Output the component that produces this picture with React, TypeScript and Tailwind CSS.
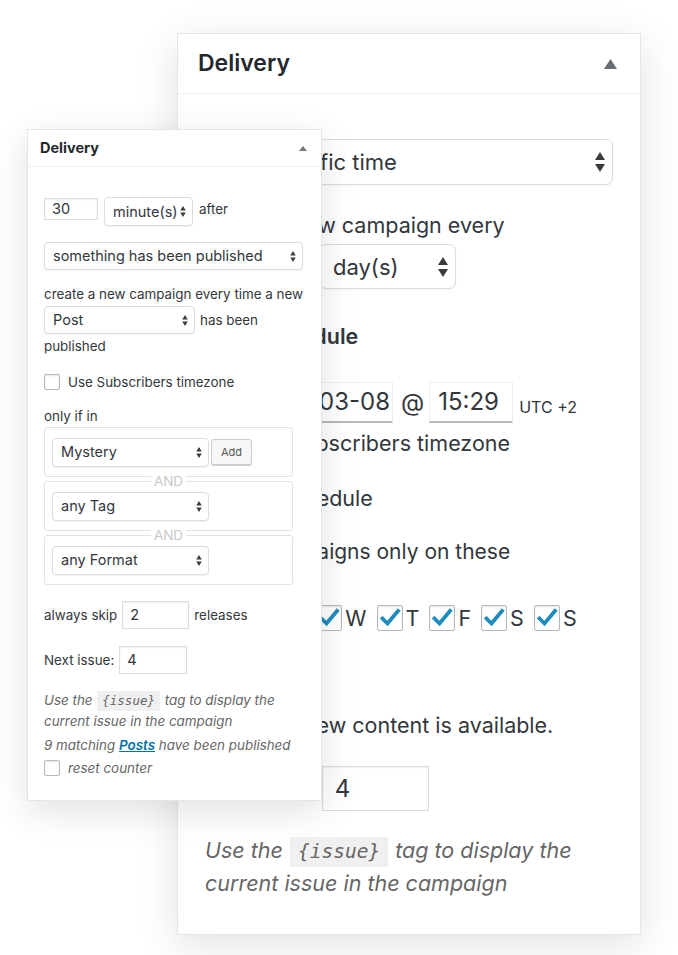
import React from "react";

function Arrows({ className }: { className?: string }) {
  return (
    <svg viewBox="0 0 10 20" className={className} fill="currentColor">
      <path d="M5 0L10 8H0Z M5 20L10 12H0Z" />
    </svg>
  );
}

function Tick({ className }: { className?: string }) {
  return (
    <svg viewBox="0 0 26 26" className={className} fill="none">
      <path d="M5.5 13.5L10.5 18.5L21 6" stroke="#1e8cbe" strokeWidth="3.8" strokeLinecap="square" />
    </svg>
  );
}

function SmallSelect({ label, className }: { label: string; className?: string }) {
  return (
    <div
      className={
        "flex items-center justify-between rounded-[4px] border border-[#dcdcdc] bg-white pl-[8px] pr-[6px] text-[14.5px] shadow-[0_1px_1px_rgba(0,0,0,0.05)] " +
        (className ?? "")
      }
    >
      <span className="whitespace-nowrap">{label}</span>
      <Arrows className="h-[11px] w-[6px] text-[#3c3c3c]" />
    </div>
  );
}

function SmallInput({ value, className }: { value: string; className?: string }) {
  return (
    <div
      className={
        "flex items-center border border-[#ddd] bg-white pl-[7px] text-[14.5px] shadow-[inset_0_1px_2px_rgba(0,0,0,0.07)] " +
        (className ?? "")
      }
    >
      {value}
    </div>
  );
}

function SmallCheckbox() {
  return (
    <span className="block h-[16px] w-[16px] shrink-0 rounded-[2px] border border-[#b4b9be] bg-white shadow-[inset_0_1px_2px_rgba(0,0,0,0.1)]" />
  );
}

function AndBox({ children, first }: { children: React.ReactNode; first?: boolean }) {
  return (
    <div
      className={
        "relative flex h-[50px] w-[249px] items-center rounded-[3px] border border-[#e2e2e2] pl-[7px] " +
        (first ? "mt-[2px]" : "mt-[4px]")
      }
    >
      {!first && (
        <span className="absolute -top-[9px] left-1/2 -translate-x-1/2 bg-white px-[3px] text-[13.5px] leading-[16px] text-[#c8c8c8]">
          AND
        </span>
      )}
      {children}
    </div>
  );
}

function SmallPanel() {
  return (
    <div className="absolute left-[27px] top-[129px] flex h-[672px] w-[295px] flex-col border border-[#e5e5e5] bg-white shadow-[0_10px_34px_rgba(0,0,0,0.12)]">
      <div className="flex h-[37px] shrink-0 items-center justify-between border-b border-[#eee] pl-[12px] pr-[14px]">
        <h2 className="text-[14.5px] font-bold text-[#23282d]">Delivery</h2>
        <svg viewBox="0 0 8 5" className="h-[5px] w-[8px] fill-[#72777c]">
          <path d="M4 0L8 5H0Z" />
        </svg>
      </div>

      <div className="flex flex-col pl-[16px] pr-[18px] pt-[30px] text-[13.4px] leading-[18px]">
        <div className="flex items-start">
          <SmallInput value="30" className="mt-[1px] h-[22px] w-[54px]" />
          <SmallSelect label="minute(s)" className="ml-[6px] h-[29px] w-[89px]" />
          <span className="ml-[6px] mt-[3px]">after</span>
        </div>

        <SmallSelect label="something has been published" className="mt-[16px] h-[28px]" />

        <p className="mt-[15px] whitespace-nowrap">create a new campaign every time a new</p>

        <div className="mt-[3px] flex items-center">
          <SmallSelect label="Post" className="h-[28px] w-[151px]" />
          <span className="ml-[5px]">has been</span>
        </div>
        <p className="mt-[3px]">published</p>

        <label className="mt-[18px] flex items-center">
          <SmallCheckbox />
          <span className="ml-[8px]">Use Subscribers timezone</span>
        </label>

        <p className="mt-[16px]">only if in</p>

        <AndBox first>
          <SmallSelect label="Mystery" className="h-[29px] w-[157px]" />
          <button className="ml-[2px] h-[26px] w-[41px] rounded-[3px] border border-[#ccc] bg-[#f7f7f7] text-[11px] text-[#555] shadow-[0_1px_0_#ccc]">
            Add
          </button>
        </AndBox>
        <AndBox>
          <SmallSelect label="any Tag" className="h-[29px] w-[157px]" />
        </AndBox>
        <AndBox>
          <SmallSelect label="any Format" className="h-[29px] w-[157px]" />
        </AndBox>

        <div className="mt-[16px] flex items-center gap-[5px]">
          <span>always skip</span>
          <SmallInput value="2" className="h-[28px] w-[67px]" />
          <span>releases</span>
        </div>

        <div className="mt-[17px] flex items-center gap-[5px]">
          <span>Next issue:</span>
          <SmallInput value="4" className="h-[28px] w-[68px]" />
        </div>

        <p className="mt-[16px] italic leading-[21px] text-[#666]">
          Use the{" "}
          <code className="mx-[1px] inline-block bg-[#f0f0f0] px-[5px] font-['DejaVu_Sans_Mono',monospace] text-[12.5px] leading-[20px]">
            {"{issue}"}
          </code>{" "}
          tag to display the current issue in the campaign
        </p>
        <p className="mt-[3px] italic leading-[21px] text-[#666]">
          9 matching{" "}
          <a className="font-semibold text-[#0073aa] underline">Posts</a> have been published
        </p>
        <label className="mt-[3px] flex items-center">
          <SmallCheckbox />
          <span className="ml-[8px] italic text-[#666]">reset counter</span>
        </label>
      </div>
    </div>
  );
}

function BigSelect({ label, className }: { label: string; className?: string }) {
  return (
    <div
      className={
        "flex items-center justify-between rounded-[7px] border border-[#dcdcdc] bg-white pr-[7px] text-[22px] shadow-[0_1px_2px_rgba(0,0,0,0.05)] " +
        (className ?? "")
      }
    >
      <span className="whitespace-nowrap">{label}</span>
      <Arrows className="h-[20px] w-[10px] text-[#3c3c3c]" />
    </div>
  );
}

function BigCheckbox({ checked }: { checked?: boolean }) {
  return (
    <span className="relative block h-[26px] w-[26px] shrink-0 rounded-[2px] border border-[#b4b9be] bg-white shadow-[inset_0_1px_2px_rgba(0,0,0,0.1)]">
      {checked && <Tick className="absolute -left-px -top-px h-[26px] w-[26px]" />}
    </span>
  );
}

function BigPanel() {
  const days = ["M", "T", "W", "T", "F", "S", "S"];
  return (
    <div className="absolute left-[177px] top-[33px] flex h-[902px] w-[464px] flex-col border border-[#e5e5e5] bg-white shadow-[0_10px_40px_rgba(0,0,0,0.12)]">
      <div className="flex h-[60px] shrink-0 items-center justify-between border-b border-[#eee] pl-[20px] pr-[23px]">
        <h2 className="text-[23px] font-semibold text-[#23282d]">Delivery</h2>
        <svg viewBox="0 0 13 10" className="h-[10px] w-[13px] fill-[#666d73]">
          <path d="M6.5 0L13 10H0Z" />
        </svg>
      </div>

      <div className="flex flex-col px-[27px] pt-[45px] text-[21.5px] leading-[30px]">
        <BigSelect label="at a specific time" className="h-[46px] pl-[14px]" />

        <p className="mt-[25px] whitespace-nowrap">create a new campaign every</p>

        <div className="mt-[4px] flex items-center">
          <div className="flex h-[45px] w-[104px] items-center border border-[#ddd] pl-[12px] text-[24px]">1</div>
          <BigSelect label="day(s)" className="ml-[10px] h-[45px] w-[137px] pl-[13px]" />
        </div>

        <p className="mt-[32px] font-semibold">Start Schedule</p>

        <div className="mt-[31px] flex items-center text-[24px]">
          <div className="flex h-[41px] w-[188px] items-center justify-end border border-b-2 border-[#eee] border-b-[#b8b8b8] border-b-dotted pr-[2px]">
            2018-03-08
          </div>
          <span className="ml-[8px]">@</span>
          <div className="ml-[5px] flex h-[41px] w-[84px] items-center border border-b-2 border-[#eee] border-b-[#b8b8b8] border-b-dotted pl-[8px]">
            15:29
          </div>
          <span className="ml-[6px] mt-[8px] text-[16px]">UTC +2</span>
        </div>

        <label className="mt-[5px] flex items-center">
          <BigCheckbox />
          <span className="ml-[12px]">Use Subscribers timezone</span>
        </label>

        <label className="mt-[25px] flex items-center">
          <BigCheckbox />
          <span className="ml-[2px]">End Schedule</span>
        </label>

        <p className="mt-[24px] text-[21px]">Send campaigns only on these weekdays:</p>

        <div className="mt-[6px] flex items-center">
          {days.map((d, i) => (
            <label key={i} className="mr-[10px] flex items-center">
              <BigCheckbox checked />
              <span className="ml-[3px]">{d}</span>
            </label>
          ))}
        </div>

        <label className="mt-[77px] flex items-center">
          <BigCheckbox />
          <span className="ml-[1px]">Only if new content is available.</span>
        </label>

        <div className="mt-[26px] flex items-center">
          <span>Next issue:</span>
          <div className="ml-[4px] flex h-[45px] w-[107px] items-center border border-[#ddd] pl-[12px] text-[24px] shadow-[inset_0_1px_2px_rgba(0,0,0,0.07)]">
            4
          </div>
        </div>

        <p className="mt-[23px] italic leading-[33px] text-[#666]">
          Use the{" "}
          <code className="mx-[1px] inline-block bg-[#f0f0f0] px-[8px] font-['DejaVu_Sans_Mono',monospace] text-[19.5px] leading-[30px]">
            {"{issue}"}
          </code>{" "}
          tag to display the current issue in the campaign
        </p>
      </div>
    </div>
  );
}

export default function App() {
  return (
    <div className="relative h-[955px] w-[678px] overflow-hidden bg-white font-['Inter',sans-serif] text-[#32373c]">
      <BigPanel />
      <SmallPanel />
    </div>
  );
}
